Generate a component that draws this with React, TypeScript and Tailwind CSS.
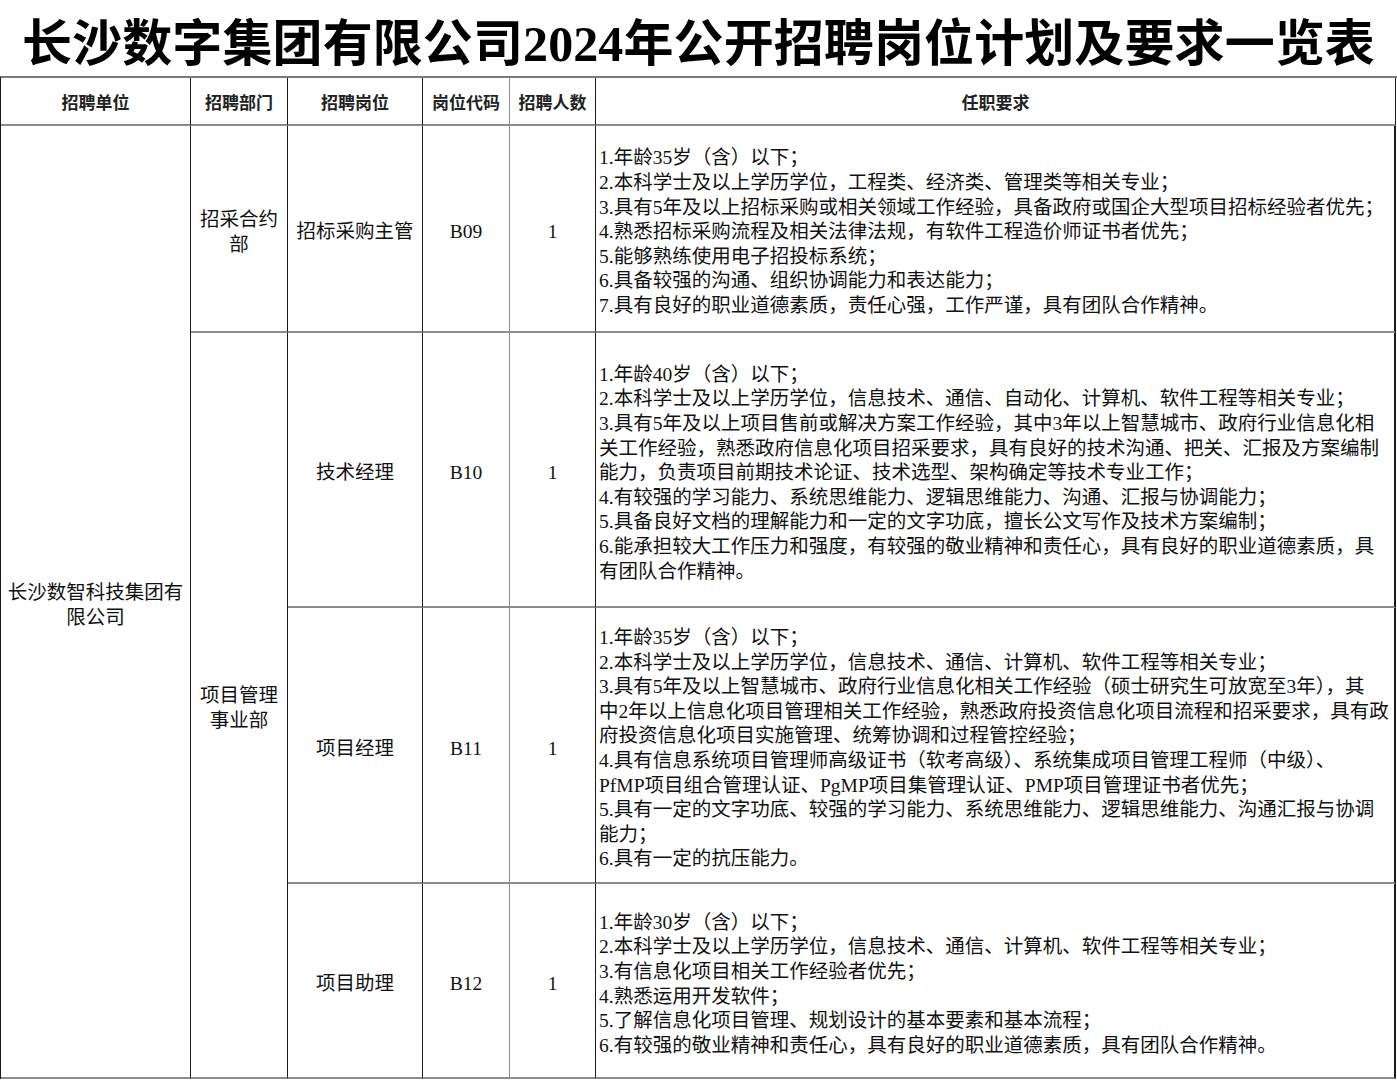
import React from "react"

type Job = {
	title: string
	code: string
	count: string
	row: string
	lines: string[]
}

const jobs: Job[] = [
	{
		title: "招标采购主管",
		code: "B09",
		count: "1",
		row: "row-start-2",
		lines: [
			"1.年龄35岁（含）以下；",
			"2.本科学士及以上学历学位，工程类、经济类、管理类等相关专业；",
			"3.具有5年及以上招标采购或相关领域工作经验，具备政府或国企大型项目招标经验者优先；",
			"4.熟悉招标采购流程及相关法律法规，有软件工程造价师证书者优先；",
			"5.能够熟练使用电子招投标系统；",
			"6.具备较强的沟通、组织协调能力和表达能力；",
			"7.具有良好的职业道德素质，责任心强，工作严谨，具有团队合作精神。",
		],
	},
	{
		title: "技术经理",
		code: "B10",
		count: "1",
		row: "row-start-3",
		lines: [
			"1.年龄40岁（含）以下；",
			"2.本科学士及以上学历学位，信息技术、通信、自动化、计算机、软件工程等相关专业；",
			"3.具有5年及以上项目售前或解决方案工作经验，其中3年以上智慧城市、政府行业信息化相",
			"关工作经验，熟悉政府信息化项目招采要求，具有良好的技术沟通、把关、汇报及方案编制",
			"能力，负责项目前期技术论证、技术选型、架构确定等技术专业工作；",
			"4.有较强的学习能力、系统思维能力、逻辑思维能力、沟通、汇报与协调能力；",
			"5.具备良好文档的理解能力和一定的文字功底，擅长公文写作及技术方案编制；",
			"6.能承担较大工作压力和强度，有较强的敬业精神和责任心，具有良好的职业道德素质，具",
			"有团队合作精神。",
		],
	},
	{
		title: "项目经理",
		code: "B11",
		count: "1",
		row: "row-start-4",
		lines: [
			"1.年龄35岁（含）以下；",
			"2.本科学士及以上学历学位，信息技术、通信、计算机、软件工程等相关专业；",
			"3.具有5年及以上智慧城市、政府行业信息化相关工作经验（硕士研究生可放宽至3年），其",
			"中2年以上信息化项目管理相关工作经验，熟悉政府投资信息化项目流程和招采要求，具有政",
			"府投资信息化项目实施管理、统筹协调和过程管控经验；",
			"4.具有信息系统项目管理师高级证书（软考高级）、系统集成项目管理工程师（中级）、",
			"PfMP项目组合管理认证、PgMP项目集管理认证、PMP项目管理证书者优先；",
			"5.具有一定的文字功底、较强的学习能力、系统思维能力、逻辑思维能力、沟通汇报与协调",
			"能力；",
			"6.具有一定的抗压能力。",
		],
	},
	{
		title: "项目助理",
		code: "B12",
		count: "1",
		row: "row-start-5",
		lines: [
			"1.年龄30岁（含）以下；",
			"2.本科学士及以上学历学位，信息技术、通信、计算机、软件工程等相关专业；",
			"3.有信息化项目相关工作经验者优先；",
			"4.熟悉运用开发软件；",
			"5.了解信息化项目管理、规划设计的基本要素和基本流程；",
			"6.有较强的敬业精神和责任心，具有良好的职业道德素质，具有团队合作精神。",
		],
	},
]

// shared cell borders: dark verticals, grey horizontals
const cell =
	"flex items-center justify-center text-center border-r border-r-[#1a1a1a] border-b-2 border-b-[#8c8c8c]"
const head = "font-bold text-[17px] text-[#222] pt-[6px]"
const body = "text-[19.5px] leading-[24.6px] pt-[8px]"

export default function App() {
	return (
		<div className="w-[1397px] bg-white text-[#111] font-['Liberation_Serif','Noto_Sans_CJK_SC',serif]">
			<h1 className="h-[76px] pt-[11px] flex items-center justify-center text-[50px] font-bold leading-none tracking-[0.1px] text-black">
				长沙数字集团有限公司2024年公开招聘岗位计划及要求一览表
			</h1>

			<div className="grid grid-cols-[190px_97px_135px_87px_86px_800px] grid-rows-[48px_207px_275px_276px_195px] border-l border-l-[#1a1a1a] border-t-2 border-t-[#7a7a7a]">
				<div className={`${cell} ${head} col-start-1 row-start-1`}>招聘单位</div>
				<div className={`${cell} ${head} col-start-2 row-start-1`}>招聘部门</div>
				<div className={`${cell} ${head} col-start-3 row-start-1`}>招聘岗位</div>
				<div className={`${cell} ${head} col-start-4 row-start-1 border-r-[#8c8c8c]`}>岗位代码</div>
				<div className={`${cell} ${head} col-start-5 row-start-1`}>招聘人数</div>
				<div className={`${cell} ${head} col-start-6 row-start-1`}>任职要求</div>

				<div className={`${cell} ${body} col-start-1 row-start-2 row-span-4 flex-col border-b border-b-[#1a1a1a]`}>
					<span>长沙数智科技集团有</span>
					<span>限公司</span>
				</div>

				<div className={`${cell} ${body} col-start-2 row-start-2 flex-col`}>
					<span>招采合约</span>
					<span>部</span>
				</div>
				<div className={`${cell} ${body} col-start-2 row-start-3 row-span-3 flex-col border-b border-b-[#1a1a1a]`}>
					<span>项目管理</span>
					<span>事业部</span>
				</div>

				{jobs.map((job, i) => {
					const last = i === jobs.length - 1
					const bottom = last ? "border-b border-b-[#1a1a1a]" : ""
					return (
						<React.Fragment key={job.code}>
							<div className={`${cell} ${body} ${bottom} col-start-3 ${job.row}`}>{job.title}</div>
							<div className={`${cell} ${body} ${bottom} col-start-4 ${job.row} border-r-[#8c8c8c]`}>{job.code}</div>
							<div className={`${cell} ${body} ${bottom} col-start-5 ${job.row}`}>{job.count}</div>
							<div
								className={`${cell} ${body} ${bottom} col-start-6 ${job.row} flex-col !items-start !text-left pl-[3px] whitespace-nowrap border-r-2`}
							>
								{job.lines.map((line) => (
									<span key={line}>{line}</span>
								))}
							</div>
						</React.Fragment>
					)
				})}
			</div>
		</div>
	)
}
